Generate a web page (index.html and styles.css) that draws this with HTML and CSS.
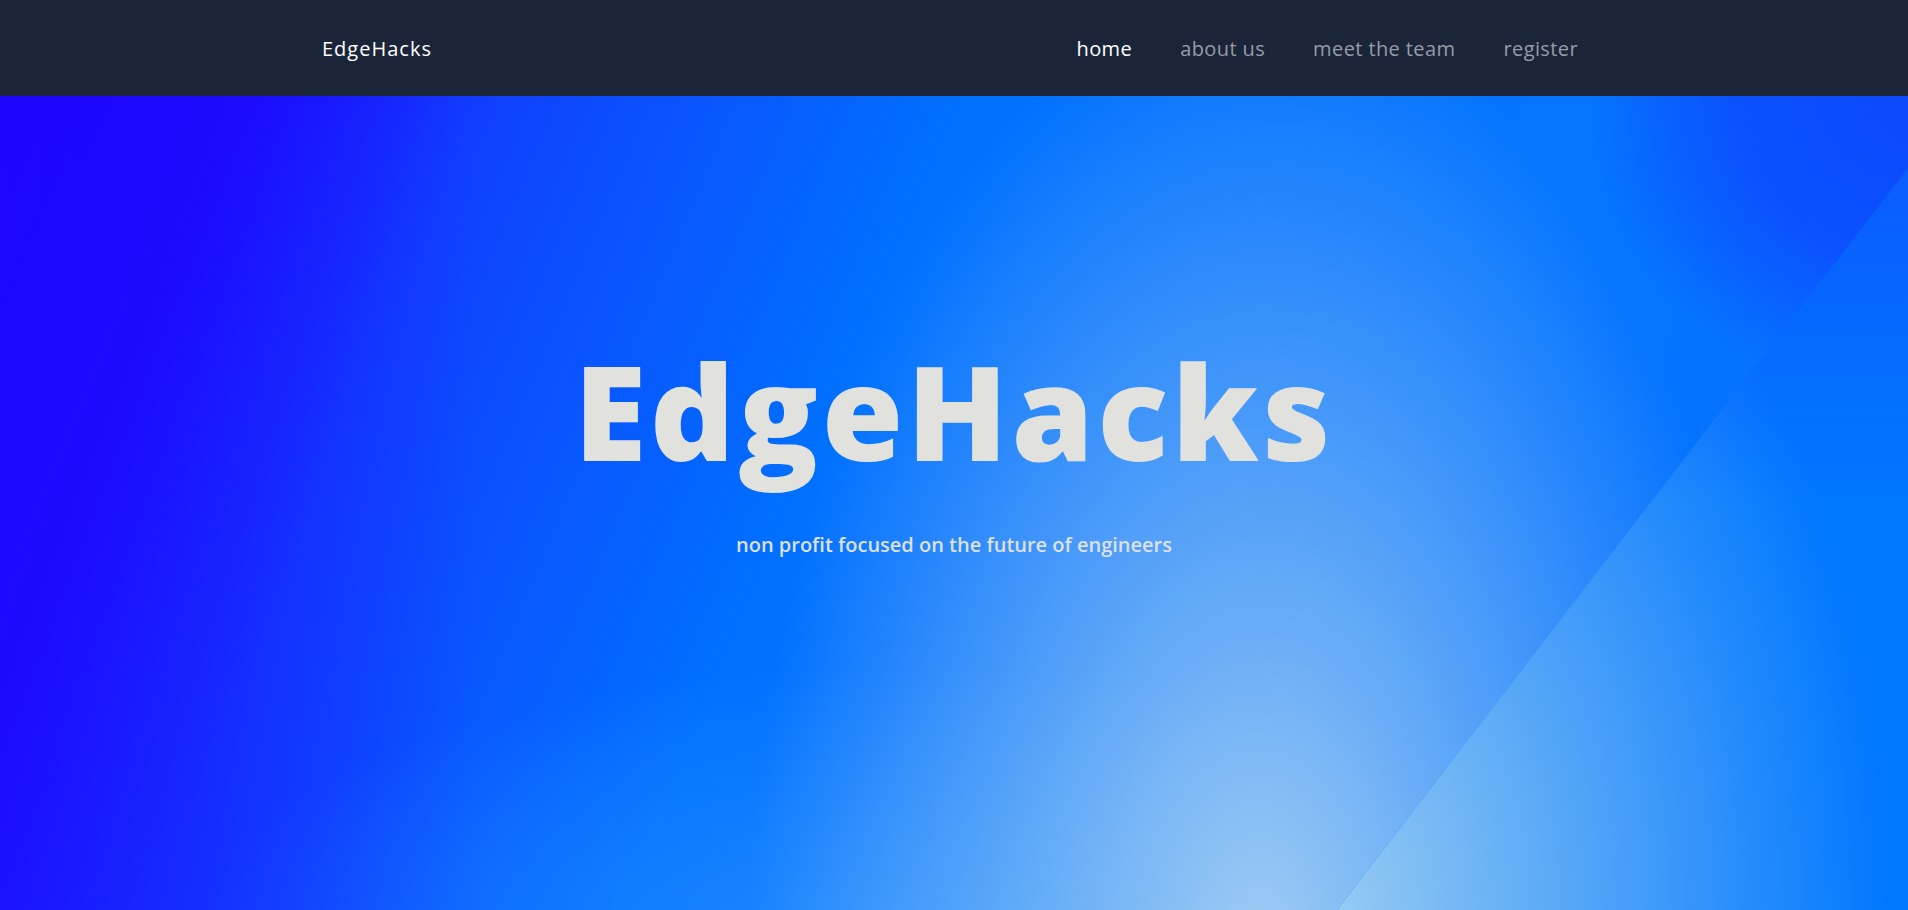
FILE: index.html
```html
<!DOCTYPE html>
<html lang="en">
<head>
<meta charset="utf-8">
<title>EdgeHacks</title>
<link rel="stylesheet" href="styles.css">
</head>
<body>
<header class="topbar">
  <div class="topbar-inner">
    <a class="brand" href="#">EdgeHacks</a>
    <nav class="nav">
      <a class="nav-link active" href="#">home</a>
      <a class="nav-link" href="#">about us</a>
      <a class="nav-link" href="#">meet the team</a>
      <a class="nav-link" href="#">register</a>
    </nav>
  </div>
</header>
<main class="hero">
  <h1 class="hero-title">EdgeHacks</h1>
  <p class="hero-sub">non profit focused on the future of engineers</p>
</main>
</body>
</html>
```

FILE: styles.css
```css
* { box-sizing: border-box; }
html, body { margin: 0; padding: 0; }
body {
  font-family: "Open Sans", "Noto Sans", sans-serif;
  background: #1b2539;
  height: 910px;
  overflow: hidden;
}
a { text-decoration: none; }

.topbar {
  height: 96px;
  background: #1b2539;
}
.topbar-inner {
  width: 1264px;
  height: 100%;
  margin: 0 auto;
  padding: 1px 8px 0 0;
  display: flex;
  align-items: center;
  justify-content: space-between;
}
.brand {
  color: #ffffff;
  font-size: 20px;
  font-weight: 500;
  letter-spacing: 1px;
  line-height: 24px;
}
.nav {
  display: flex;
  gap: 48px;
}
.nav-link {
  color: #959ca8;
  font-size: 20px;
  font-weight: 500;
  letter-spacing: 0.4px;
  line-height: 24px;
}
.nav-link.active { color: #ffffff; }

.hero {
  position: relative;
  height: 814px;
  overflow: hidden;
  padding-top: 248px;
  display: flex;
  flex-direction: column;
  align-items: center;
  background:
    radial-gradient(380px 360px at 100% 0,
      rgba(12, 72, 255, 1) 0%,
      rgba(12, 72, 255, 0.8) 45%,
      rgba(12, 72, 255, 0) 85%),
    radial-gradient(540px 1020px at 1260px 870px,
      rgba(168, 208, 242, 0.95) 0%,
      rgba(168, 208, 242, 0.45) 50%,
      rgba(168, 208, 242, 0) 95%),
    radial-gradient(700px 260px at 900px 830px,
      rgba(60, 160, 255, 0.45) 0%,
      rgba(60, 160, 255, 0) 100%),
    linear-gradient(90deg,
      rgba(30, 8, 255, 0.6) 0%,
      rgba(30, 8, 255, 0.35) 12%,
      rgba(30, 8, 255, 0) 25%),
    linear-gradient(113deg,
      #1e00ff 0%,
      #1a0cff 11%,
      #1040ff 22%,
      #0070ff 43%,
      #0575ff 70%,
      #0570ff 100%);
}
.hero::after {
  content: "";
  position: absolute;
  left: 1337px;
  top: 72px;
  width: 571px;
  height: 742px;
  clip-path: polygon(100% 0, 100% 100%, 0 100%);
  background:
    radial-gradient(600px 900px at 0 100%,
      rgba(150, 202, 242, 1) 0%,
      rgba(150, 202, 242, 0) 92%),
    linear-gradient(180deg, #0a5cff 0%, #0077ff 45%);
}
.hero-title {
  position: relative;
  z-index: 1;
  margin: 0;
  font-family: "Open Sans", sans-serif;
  font-weight: 800;
  font-size: 132px;
  letter-spacing: 3.5px;
  line-height: 1;
  color: #e1e2de;
}
.hero-sub {
  position: relative;
  z-index: 1;
  margin: 59px 0 0;
  font-size: 20px;
  font-weight: 600;
  line-height: 1;
  color: #dde0e6;
}
```
